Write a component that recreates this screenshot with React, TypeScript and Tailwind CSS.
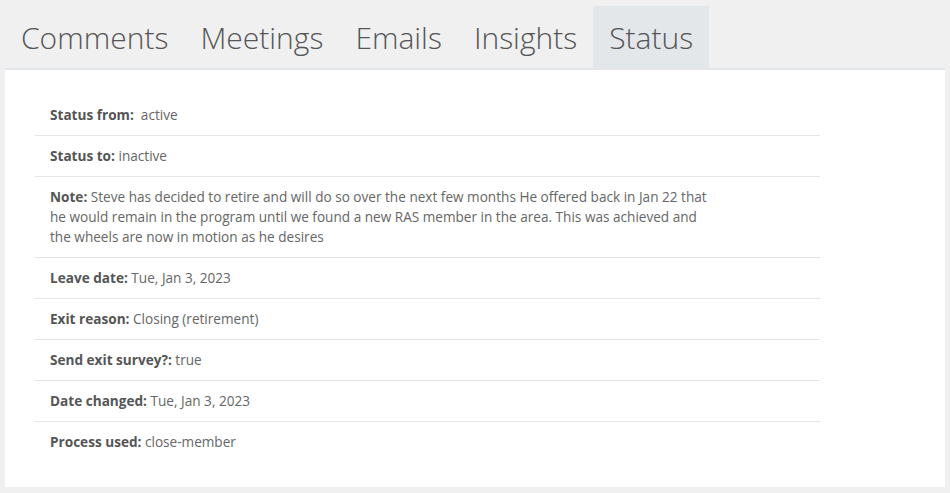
import React from "react";

const tabs = ["Comments", "Meetings", "Emails", "Insights", "Status"];

const rows: { label: string; value: string }[] = [
  { label: "Status from:", value: "\u00a0 active" },
  { label: "Status to:", value: " inactive" },
  {
    label: "Note:",
    value:
      " Steve has decided to retire and will do so over the next few months He offered back in Jan 22 that he would remain in the program until we found a new RAS member in the area. This was achieved and the wheels are now in motion as he desires",
  },
  { label: "Leave date:", value: " Tue, Jan 3, 2023" },
  { label: "Exit reason:", value: " Closing (retirement)" },
  { label: "Send exit survey?:", value: " true" },
  { label: "Date changed:", value: " Tue, Jan 3, 2023" },
  { label: "Process used:", value: " close-member" },
];

export default function App() {
  return (
    <div
      className="w-[950px] h-[493px] bg-[#f0f0f0] pt-[6px] px-[5px] overflow-hidden"
      style={{ fontFamily: '"Open Sans", sans-serif' }}
    >
      <div className="flex">
        {tabs.map((t) => (
          <div
            key={t}
            className={`h-[62px] px-[16px] flex items-center text-[30px] font-light text-[#555] ${
              t === "Status" ? "bg-[#e4e7ea]" : ""
            }`}
          >
            {t}
          </div>
        ))}
      </div>
      <div className="bg-white border-t-2 border-[#e2e6ea] h-[419px] pt-[25px] pl-[30px]">
        <div className="w-[785px]">
          {rows.map((r, i) => (
            <div
              key={r.label}
              className={`px-[15px] py-[10px] text-[13.6px] leading-[20px] text-[#666] ${
                i < rows.length - 1 ? "border-b border-[#e5e5e5]" : ""
              }`}
            >
              <div className={r.label === "Note:" ? "max-w-[662px]" : ""}>
                <span className="font-bold text-[#555]">{r.label}</span>
                {r.value}
              </div>
            </div>
          ))}
        </div>
      </div>
    </div>
  );
}
